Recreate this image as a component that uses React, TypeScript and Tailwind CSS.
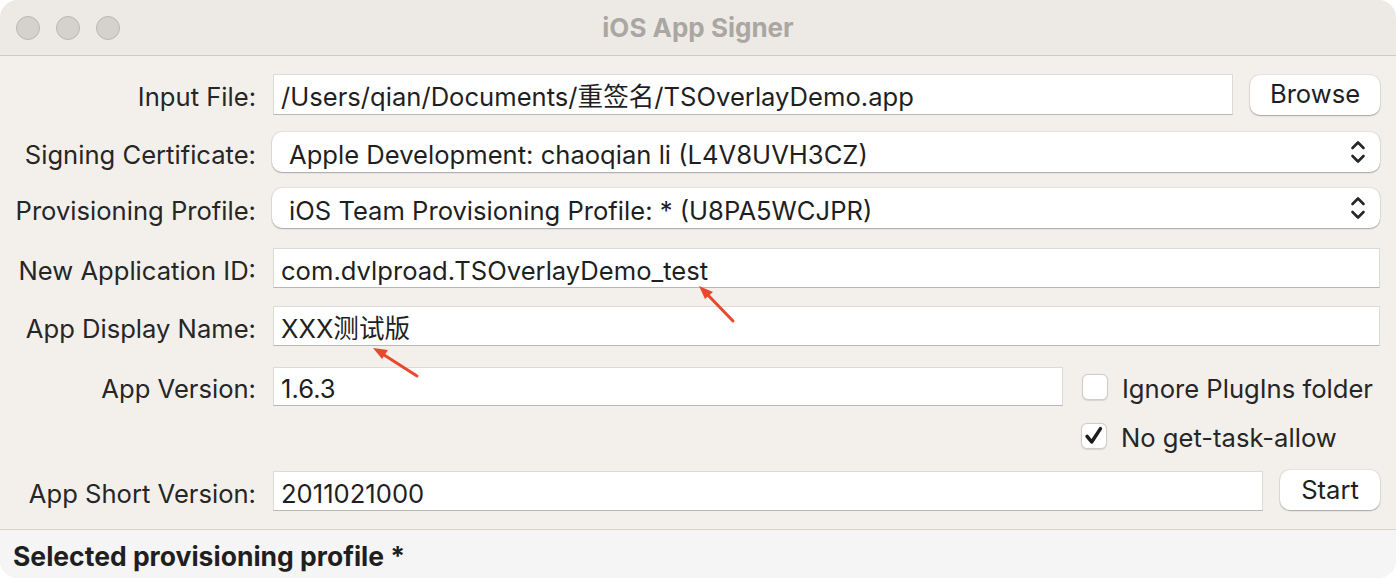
import type { ReactNode } from "react";

const font = "font-['Inter','Noto_Sans_CJK_SC',sans-serif]";

const Label = ({ children }: { children: ReactNode }) => (
  <div className="w-[256px] shrink-0 text-right text-[25.6px] text-[#262626] pt-[6px]">
    {children}
  </div>
);

const TextField = ({ value, className = "" }: { value: string; className?: string }) => (
  <div
    className={`h-full flex items-center bg-white border border-[#dddbd7] border-b-[#b9b7b4] pl-[7px] pt-[6px] text-[25.6px] text-[#1f1f1f] ${className}`}
  >
    {value}
  </div>
);

const Chevrons = () => (
  <svg width="16" height="26" viewBox="0 0 16 26" fill="none" stroke="#262626" strokeWidth="2.6" strokeLinecap="round" strokeLinejoin="round">
    <path d="M2.5 9 L8 3.5 L13.5 9" />
    <path d="M2.5 17 L8 22.5 L13.5 17" />
  </svg>
);

const Popup = ({ value }: { value: string }) => (
  <div className="flex-1 h-full flex items-center justify-between bg-white rounded-[10px] shadow-[0_1px_1.5px_rgba(0,0,0,0.28),0_0_0_1px_rgba(0,0,0,0.05)] pl-[17px] pr-[14px] text-[25.6px] text-[#1f1f1f]">
    <span className="pt-[6px]">{value}</span>
    <Chevrons />
  </div>
);

const Button = ({ label, className = "" }: { label: string; className?: string }) => (
  <div
    className={`h-[40px] shrink-0 flex items-center justify-center bg-white rounded-[10px] shadow-[0_1px_1.5px_rgba(0,0,0,0.28),0_0_0_1px_rgba(0,0,0,0.05)] text-[25.6px] text-[#1f1f1f] ${className}`}
  >
    {label}
  </div>
);

const Checkbox = ({ checked, label }: { checked?: boolean; label: string }) => (
  <div className="flex items-center">
    <div className="w-[26px] h-[26px] rounded-[6px] bg-white border border-[#cfcdca] shadow-[0_0.5px_1px_rgba(0,0,0,0.12)] flex items-center justify-center">
      {checked && (
        <svg width="26" height="26" viewBox="0 0 26 26" fill="none" stroke="#1c1c1c" strokeWidth="3.8" strokeLinecap="round" strokeLinejoin="round">
          <path d="M5.5 13.5 L10.5 19.5 L20 5" />
        </svg>
      )}
    </div>
    <span className="ml-[14px] pt-[5px] text-[25.6px] text-[#262626]">{label}</span>
  </div>
);

export default function App() {
  return (
    <div className={`w-[1396px] h-[578px] bg-white ${font}`}>
      <div className="relative w-full h-full rounded-[18px] overflow-hidden bg-[#f3f0ec] flex flex-col">
        {/* title bar */}
        <div className="h-[56px] shrink-0 bg-[#edeae6] border-b border-[#cfccc8] flex items-center relative">
          <div className="flex gap-[16px] pl-[16px]">
            <div className="w-[24px] h-[24px] rounded-full bg-[#d5d2ce] border border-[#bab7b3]" />
            <div className="w-[24px] h-[24px] rounded-full bg-[#d5d2ce] border border-[#bab7b3]" />
            <div className="w-[24px] h-[24px] rounded-full bg-[#d5d2ce] border border-[#bab7b3]" />
          </div>
          <div className="absolute inset-0 flex items-center justify-center text-[26px] font-bold text-[#aaa7a3] pointer-events-none">
            iOS App Signer
          </div>
        </div>

        {/* form */}
        <div className="flex-1 flex flex-col pr-[16px]">
          <div className="mt-[18px] h-[41px] flex items-center gap-[17px]">
            <Label>Input File:</Label>
            <TextField value="/Users/qian/Documents/重签名/TSOverlayDemo.app" className="flex-1" />
            <Button label="Browse" className="w-[130px]" />
          </div>
          <div className="mt-[17px] h-[40px] flex items-center gap-[16px]">
            <Label>Signing Certificate:</Label>
            <Popup value="Apple Development: chaoqian li (L4V8UVH3CZ)" />
          </div>
          <div className="mt-[16px] h-[40px] flex items-center gap-[16px]">
            <Label>Provisioning Profile:</Label>
            <Popup value="iOS Team Provisioning Profile: * (U8PA5WCJPR)" />
          </div>
          <div className="mt-[20px] h-[40px] flex items-center gap-[17px]">
            <Label>New Application ID:</Label>
            <TextField value="com.dvlproad.TSOverlayDemo_test" className="flex-1" />
          </div>
          <div className="mt-[18px] h-[40px] flex items-center gap-[17px]">
            <Label>App Display Name:</Label>
            <TextField value="XXX测试版" className="flex-1" />
          </div>
          <div className="mt-[21px] h-[39px] flex items-center gap-[17px]">
            <Label>App Version:</Label>
            <TextField value="1.6.3" className="w-[790px]" />
            <div className="ml-[2px]">
              <Checkbox label="Ignore PlugIns folder" />
            </div>
          </div>
          <div className="mt-[17px] h-[26px] flex items-center pl-[1081px]">
            <Checkbox checked label="No get-task-allow" />
          </div>
          <div className="mt-[22px] h-[40px] flex items-center gap-[17px]">
            <Label>App Short Version:</Label>
            <TextField value="2011021000" className="flex-1" />
            <Button label="Start" className="w-[100px] -mt-[2px]" />
          </div>
        </div>

        {/* status bar */}
        <div className="h-[49px] shrink-0 bg-[#f5f5f5] border-t border-[#d6d3cf] flex items-center pl-[13px] pt-[5px] text-[26.5px] font-bold text-[#1f1f1f]">
          Selected provisioning profile *
        </div>

        {/* annotation arrows */}
        <svg className="absolute inset-0 pointer-events-none" width="1396" height="578" viewBox="0 0 1396 578">
          <g stroke="#e9482c" strokeWidth="3" strokeLinecap="round" fill="#e9482c">
            <line x1="733" y1="321" x2="706" y2="293" />
            <polygon points="699,286 713,292 705,299" stroke="none" />
            <line x1="417" y1="376" x2="381" y2="353" />
            <polygon points="373,348 388,350 382,359" stroke="none" />
          </g>
        </svg>
      </div>
    </div>
  );
}
